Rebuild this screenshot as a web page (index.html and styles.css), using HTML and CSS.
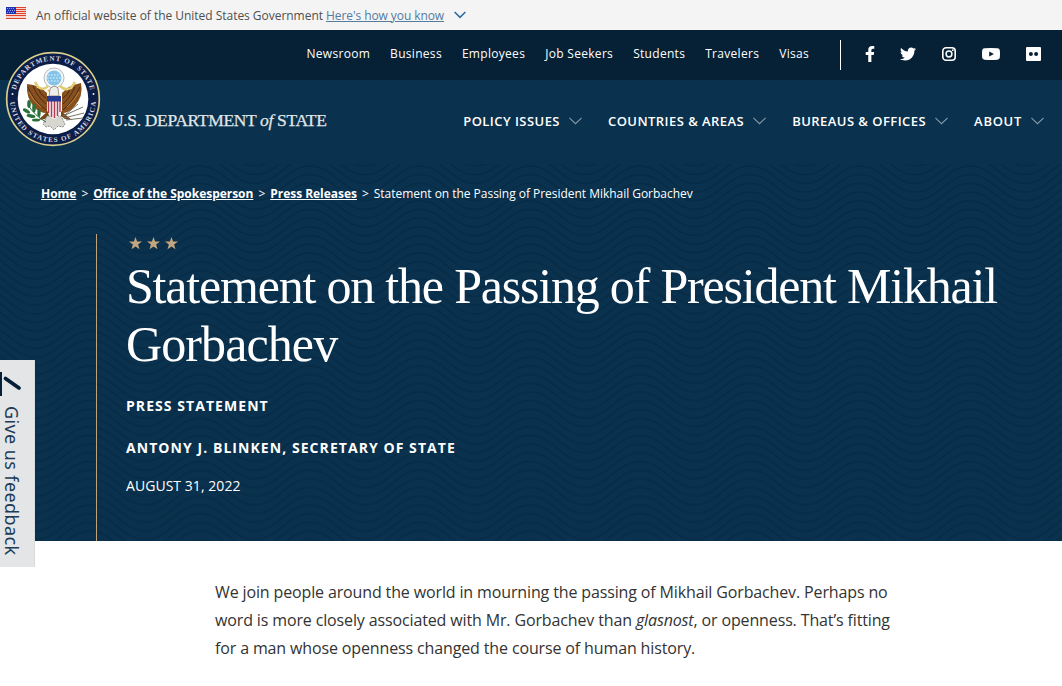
FILE: index.html
```
<!DOCTYPE html>
<html lang="en">
<head>
<meta charset="utf-8">
<title>Statement on the Passing of President Mikhail Gorbachev</title>
<link rel="stylesheet" href="styles.css">
</head>
<body>
<div class="banner">
  <svg class="flag" width="20" height="12" viewBox="0 0 20 12"><rect width="20" height="12" fill="#f6d5cf"/><path d="M0 .5h20M0 2.5h20M0 4.5h20M0 6.5h20M0 8.5h20M0 11.5h20" stroke="#e0402c"/><rect width="10" height="7" fill="#1e33b1"/><path d="M1 1.5h8M2 3.5h7M1 5.5h8" stroke="#8d9be0" stroke-dasharray="1 1"/></svg>
  <span class="banner-text">An official website of the United States Government</span>
  <a class="banner-link">Here's how you know</a>
  <svg width="12" height="8" viewBox="0 0 12 8" fill="none" stroke="#2e6ca4" stroke-width="1.6"><path d="M.6 1 6 6.3 11.4 1"/></svg>
</div>
<header>
  <div class="topbar">
    <nav class="links"><a>Newsroom</a><a>Business</a><a>Employees</a><a>Job Seekers</a><a>Students</a><a>Travelers</a><a>Visas</a></nav>
    <div class="social">
      <svg width="10" height="16" viewBox="0 0 320 512"><path d="M279 288l14-93h-89v-60c0-25 12-50 52-50h41V7s-37-7-72-7c-73 0-121 44-121 125v70H23v93h81v224h100V288z"/></svg>
      <svg width="16" height="16" viewBox="0 0 512 512"><path d="M459 152c.3 4.500.3 9 .3 13.600C459.300 304 354 464 161 464 101.500 464 46 447 0 417c8 1 16 1.300 25 1.300 49 0 94-16.600 130-45-46-1-85-31-98-73 6.500 1 13 1.600 20 1.600 9.400 0 19-1.300 27.600-3.600-48-10-84-52-84-103v-1.300c14 8 30 13 47.400 13.600C39.600 189 21 157 21 120c0-19.500 5-37 14-53 52 64 130 106 217 110-1.600-8-2.600-16-2.600-24 0-58 47-105 105-105 30 0 57.500 12.700 77 33 24-4.500 46-13 66.600-25.300-8 24-24 45-46 58 21-2.300 41.600-8 60.400-16-14 21-32 39.300-53 54z"/></svg>
      <svg width="14" height="14" viewBox="0 0 14 14"><rect x=".8" y=".8" width="12.400" height="12.400" rx="3.300" fill="none" stroke="#fff" stroke-width="1.600"/><circle cx="7" cy="7" r="2.900" fill="none" stroke="#fff" stroke-width="1.500"/><circle cx="10.800" cy="3.200" r=".9"/></svg>
      <svg width="18" height="12" viewBox="0 0 18 13" preserveAspectRatio="none"><path fill-rule="evenodd" d="M2.500.4Q9-.3 15.500.4 17.500.6 17.800 2.500q.4 4 0 8-.3 1.800-2.300 2.100-6.500.7-13 0-2-.3-2.300-2.100-.4-4 0-8Q.5.600 2.500.4zM7.200 3.800v5.400l4.700-2.700z"/></svg>
      <svg width="15" height="14" viewBox="0 0 15 14"><path fill-rule="evenodd" d="M1 0h13Q15 0 15 1v12q0 1-1 1h-13Q0 14 0 13v-12Q0 0 1 0zM4.900 5a2 2 0 1 0 .01 4 2 2 0 1 0-.01-4zM10.100 5a2 2 0 1 0 .01 4 2 2 0 1 0-.01-4z"/></svg>
    </div>
  </div>
  <div class="mainbar">
    <div class="brand">U.S. DEPARTMENT <i>of</i> STATE</div>
    <nav class="menu">
      <a class="m1">POLICY ISSUES</a><svg width="13" height="8"><path d="M.4.800 6.500 6.700 12.600.8"/></svg>
      <a class="m2">COUNTRIES &amp; AREAS</a><svg width="13" height="8"><path d="M.4.800 6.500 6.700 12.600.8"/></svg>
      <a class="m3">BUREAUS &amp; OFFICES</a><svg width="13" height="8"><path d="M.4.800 6.500 6.700 12.600.8"/></svg>
      <a class="m4">ABOUT</a><svg width="13" height="8"><path d="M.4.800 6.500 6.700 12.600.8"/></svg>
    </nav>
  </div>
  <svg class="seal" width="96" height="96" viewBox="0 0 96 96">
    <defs><path id="ringTop" d="M9.800 48a38.200 38.200 0 0 1 76.400 0"/><path id="ringBottom" d="M5 48a43 43 0 0 0 86 0"/></defs>
    <circle cx="48" cy="48" r="46.300" fill="#0c1e48" stroke="#d8cd8d" stroke-width="1.700"/>
    <circle cx="48" cy="48" r="35.300" fill="#fff"/>
    <g class="seal-text"><text><textPath href="#ringTop" startOffset="9" textLength="102">DEPARTMENT OF STATE</textPath></text><text><textPath href="#ringBottom" startOffset="3" textLength="129">UNITED STATES OF AMERICA</textPath></text></g>
    <circle cx="7.500" cy="43" r="1" fill="#eee"/><circle cx="88.500" cy="43" r="1" fill="#eee"/>
    <circle cx="49" cy="27" r="10" fill="#f3f7fa" stroke="#b8b9b3"/><circle cx="49" cy="27" r="7.500" fill="#83c3e7"/>
    <path d="M43 24h12M42 27h14M43 30h12" stroke="#e8f6ff" stroke-dasharray="1.500 1.500"/>
    <path d="M42 42Q35 34 22 33q-1 14 7 23 5 6 13 6zM57 42q7-8 19-10 3 13-7 24-5 6-12 6z" fill="#89501f"/>
    <path d="M23 36q5 13 18 23M28 35q5 12 13 18M33 37q2 7 8 10M75 36q-6 13-17 23M70 36q-6 12-12 17M65 38q-2 6-7 9" fill="none" stroke="#4b2b16" stroke-width="1"/>
    <path d="M24 41q4 9 12 15M74 41q-5 9-12 15" fill="none" stroke="#c79042" stroke-width=".8"/>
    <path d="M30 31l3 5q6 4 10-1M70 31l-4 6q-6 3-11-2" fill="none" stroke="#e0cd72" stroke-width="2.500"/>
    <path d="M43 60l-10 9 7-1 4-3M56 60l11 9-7-1-4-3" fill="#784718"/>
    <path d="M42 65l-4 8 3 3 4-1 4 4 4-4 5 1 2-3-4-8z" fill="#d7d6cf" stroke="#77746b" stroke-width=".8" stroke-dasharray="2 1"/>
    <path d="M44 45l1-7q4-5 8-1l1 8z" fill="#eee" stroke="#71573b" stroke-width=".6"/><path d="M45 38l-3 2 3 1z" fill="#dfaa31"/>
    <path d="M42.500 46h13v13q-1 7-6.500 9-5.500-2-6.500-9z" fill="#eee"/><path d="M43.500 50v12M46.500 50v16M49.500 50v17M52.500 50v15M55 50v11" stroke="#b63b4f" stroke-width="1.400"/><path d="M42 45h14v5.500H42z" fill="#253b92"/>
    <path d="M41 71Q30 65 23 54" fill="none" stroke="#28713a"/><g fill="#28713a"><ellipse cx="24" cy="53" rx="1.800" ry="4"/><ellipse cx="21.500" cy="60" rx="4" ry="1.800" transform="rotate(30 21.500 60)"/><ellipse cx="29" cy="57" rx="1.800" ry="4.500"/><ellipse cx="26" cy="65" rx="4.500" ry="1.800" transform="rotate(10 26 65)"/><ellipse cx="34" cy="62" rx="1.700" ry="4"/><ellipse cx="31" cy="69" rx="4" ry="1.500"/></g>
    <path d="M58 65 78 56M59 67l20-5M61 69l17-2M60 64l13-11" stroke="#777568"/>
  </svg>
</header>
<main>
<section class="hero">
  <svg class="waves" width="1062" height="377"><defs><pattern id="wave" x="90" y="2" width="110" height="86.900" patternUnits="userSpaceOnUse"><g id="lines" fill="none" stroke="#072c48" stroke-width="1.800"></g></pattern></defs><rect width="1062" height="377" fill="url(#wave)"/></svg>
  <nav class="crumbs"><a>Home</a><span>&gt;</span><a>Office of the Spokesperson</a><span>&gt;</span><a>Press Releases</a><span>&gt;</span><em>Statement on the Passing of President Mikhail Gorbachev</em></nav>
  <div class="headline">
    <svg class="stars" width="50" height="13" viewBox="0 0 50 13"><defs><path id="star" d="M6.500 0 8.100 4.500 13 4.600 9.100 7.500 10.500 12.300 6.500 9.500 2.500 12.300 3.900 7.500 0 4.600 4.900 4.500z"/></defs><use href="#star"/><use href="#star" x="18"/><use href="#star" x="36"/></svg>
    <h1><span class="t1">Statement on the Passing of President Mikhail</span><br><span class="t2">Gorbachev</span></h1>
    <p class="kind">PRESS STATEMENT</p>
    <p class="author">ANTONY J. BLINKEN, SECRETARY OF STATE</p>
    <p class="date">AUGUST 31, 2022</p>
  </div>
</section>
<article>
  <p>We join people around the world in mourning the passing of Mikhail Gorbachev. Perhaps no<br>word is more closely associated with Mr. Gorbachev than <i>glasnost</i>, or openness. That’s fitting<br>for a man whose openness changed the course of human history.</p>
</article>
</main>
<aside class="feedback">
  <svg width="24" height="24" viewBox="0 0 24 24"><path d="M0 0v24" stroke="#071f38" stroke-width="4"/><path d="M5.500 6.500 19 16" stroke="#071f38" stroke-width="3.800" stroke-linecap="round"/></svg>
  <span>Give us feedback</span>
</aside>
<script src="waves.js"></script>
</body>
</html>
```
FILE: styles.css
```
*{box-sizing:border-box}
body{margin:0;height:686px;overflow:hidden;background:#fff;font-family:"Open Sans",sans-serif;position:relative}
p,h1{margin:0}
.banner{height:30px;background:#f4f4f4;display:flex;align-items:center;padding:0 0 0 6px;font-size:12px;letter-spacing:-.03px;color:#4f4f4f}
.flag{margin:-4px 10px 0 0}
.banner-text{margin-right:3px;white-space:nowrap}
.banner-link{color:#557b9f;text-decoration:underline;margin-right:10px;white-space:nowrap;letter-spacing:-.08px}
header{position:relative;color:#fff}
.topbar{height:50px;background:#062136;display:flex;justify-content:flex-end;align-items:center;padding-right:21px}
.links{display:flex;gap:20px;font-size:12px;letter-spacing:.3px;margin-right:31px;padding-bottom:3px}
.social{height:30px;border-left:1px solid #fff;display:flex;align-items:center;gap:26px;padding:0 0 2px 24px;fill:#fff}
.social svg:first-child{margin-right:-1px}
.mainbar{height:84px;background:#0a314d;display:flex;justify-content:space-between;align-items:center;padding:0 18px 3px 111px}
.brand{font:17.500px "Liberation Serif",serif;color:#e1e6ea;white-space:nowrap;letter-spacing:-.34px;-webkit-text-stroke:.25px #e1e6ea}
.menu{display:flex;align-items:center;font-size:13px;font-weight:600;letter-spacing:.45px;white-space:nowrap}
.menu svg{margin:0 26px 0 9px;fill:none;stroke:#8498a6;stroke-width:1.100}
.menu svg:last-child{margin-right:0}
.m4{letter-spacing:.7px}
.seal{position:absolute;left:5px;top:21px}
.seal-text{font:bold 7px "Liberation Serif",serif;fill:#d7dae0}
.hero{position:relative;height:377px;background:#0a314d;color:#fff;display:flex;flex-direction:column}
.waves{position:absolute;inset:0}
.crumbs{position:relative;padding:21px 0 0 41px;height:70px;display:flex;gap:5px;font-size:12px;letter-spacing:-.03px;line-height:18px;white-space:nowrap}
.crumbs a{font-weight:700;text-decoration:underline}
.crumbs em{font-style:normal}
.headline{position:relative;flex:1;margin-left:96px;border-left:1px solid #c3a27b;padding-left:29px}
.stars{display:block;margin:3px 0 0 3px;fill:#c3a681}
h1{font:400 50px/58px "Liberation Serif",serif;margin-top:7px;white-space:nowrap}
.t1{letter-spacing:-1.200px}
.t2{letter-spacing:-.9px}
.kind,.author{font-size:14px;font-weight:700;letter-spacing:1.060px;line-height:20px}
.kind{margin-top:23px}
.author{margin-top:22px}
.date{font-size:14px;line-height:20px;margin-top:18px;letter-spacing:.05px}
article{padding:37px 0 0 215px;font-size:16px;line-height:28px;letter-spacing:-.135px;color:#333;white-space:nowrap}
.feedback{position:absolute;left:0;top:360px;width:35px;height:207px;background:#e4e5e7;border-right:1px solid #d5d9dc;display:flex;flex-direction:column;align-items:flex-start;padding-top:12px;color:#203b56}
.feedback span{writing-mode:vertical-rl;font:18px/24px "Noto Sans",sans-serif;margin-top:10px;white-space:nowrap;letter-spacing:.4px}
```
FILE: waves.js
```
const group = document.getElementById('lines');
for (let i = -5; i < 15; i++) {
  const y = i * 8.69;
  const line = document.createElementNS('http://www.w3.org/2000/svg', 'path');
  line.setAttribute('d', `M-55 ${y + 26}C-32 ${y + 26} -23 ${y} 0 ${y}S32 ${y + 26} 55 ${y + 26}S87 ${y} 110 ${y}S142 ${y + 26} 165 ${y + 26}`);
  group.appendChild(line);
}
```
